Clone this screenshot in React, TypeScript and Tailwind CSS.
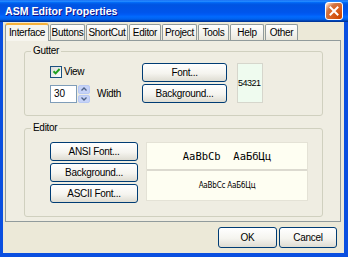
import React from "react";

function XPButton({ children, className }: { children: React.ReactNode; className?: string }) {
  return (
    <div
      className={`flex items-center justify-center rounded-[3px] border border-[#003c74] bg-[linear-gradient(to_bottom,#ffffff,#f5f4ef_55%,#dedcd2)] text-[10px] tracking-[-0.3px] leading-none text-black ${className ?? ""}`}
    >
      {children}
    </div>
  );
}

const tabs: { label: string; w: string; sel?: boolean }[] = [
  { label: "Interface", w: "w-[44px]", sel: true },
  { label: "Buttons", w: "w-[35px]" },
  { label: "ShortCut", w: "w-[42px]" },
  { label: "Editor", w: "w-[32px]" },
  { label: "Project", w: "w-[35px]" },
  { label: "Tools", w: "w-[31px]" },
  { label: "Help", w: "w-[34px]" },
  { label: "Other", w: "w-[33px]" },
];

export default function App() {
  return (
    <div className="w-[348px] h-[257px] flex flex-col bg-[#0a4fe0] font-['Liberation_Sans',Arial,sans-serif] text-black select-none">
      {/* Title bar */}
      <div className="h-[22px] flex items-center justify-between pl-[5px] pr-[5px] bg-[linear-gradient(to_bottom,#0058ee_0%,#3593ff_4%,#288eff_6%,#127dff_8%,#036ffc_10%,#0262ee_14%,#0057e5_20%,#0054e3_24%,#0055eb_56%,#005bf5_66%,#026afe_76%,#0062ef_86%,#0052d6_92%,#0040ab_94%,#003092_100%)]">
        <span className="text-white font-bold text-[10.6px] leading-none [text-shadow:1px_1px_#0f1089]">
          ASM Editor Properties
        </span>
        <div className="w-[18px] h-[18px] rounded-[3px] border border-white bg-[radial-gradient(circle_at_90%_90%,#cc4600_0%,#dc6527_55%,#cd7546_70%,#ffccb2_90%,#fff_100%)] flex items-center justify-center">
          <svg width="10" height="10" viewBox="0 0 10 10">
            <path d="M1.5 1.5 L8.5 8.5 M8.5 1.5 L1.5 8.5" stroke="white" strokeWidth="2" strokeLinecap="square" />
          </svg>
        </div>
      </div>

      {/* Body */}
      <div className="flex-1 flex flex-col bg-[#ece9d8] ml-[3px] mr-[4px] mb-[4px] pl-[2px] pr-[3px] pt-[1px]">
        {/* Tabs */}
        <div className="h-[17px] flex items-end gap-[1px] relative z-10">
          {tabs.map((t) =>
            t.sel ? (
              <div
                key={t.label}
                className={`${t.w} h-[18px] -mb-[1px] flex items-center justify-center text-[10px] tracking-[-0.3px] leading-none border border-b-0 border-[#919b9c] border-t-[2px] border-t-[#f7b23a] rounded-t-[3px] bg-[#f6f5ee]`}
              >
                {t.label}
              </div>
            ) : (
              <div
                key={t.label}
                className={`${t.w} h-[16px] flex items-center justify-center text-[10px] tracking-[-0.3px] leading-none border border-b-0 border-[#919b9c] rounded-t-[2px] bg-[linear-gradient(to_bottom,#ffffff,#f3f2ec_60%,#e9e7dc)]`}
              >
                {t.label}
              </div>
            )
          )}
        </div>

        {/* Tab panel */}
        <div className="h-[182px] border border-[#919b9c] bg-[#efede2] pl-[18px] pr-[17px] pt-[4px] flex flex-col gap-[6px]">
          {/* Gutter */}
          <fieldset className="border border-[#d0d0bf] rounded-[3px] pl-[25px] pr-[4px] pt-[6px] pb-[12px]">
            <legend className="-ml-[19px] px-[2px] text-[10px] tracking-[-0.3px] leading-[12px]">Gutter</legend>
            <div className="flex">
              <div className="w-[92px] flex flex-col">
                <div className="h-[13px] mt-[2px] flex items-center gap-[2px]">
                  <div className="w-[12px] h-[12px] border border-[#1c5180] bg-[linear-gradient(135deg,#dcdcd7,#ffffff)] flex items-center justify-center">
                    <svg width="9" height="9" viewBox="0 0 9 9">
                      <path d="M1.5 4.2 L3.6 6.4 L7.6 2" stroke="#21a121" strokeWidth="2" fill="none" />
                    </svg>
                  </div>
                  <span className="text-[10px] tracking-[-0.3px] leading-none">View</span>
                </div>
                <div className="mt-[7px] h-[18px] flex items-center">
                  <div className="w-[27px] h-[18px] border border-[#7f9db9] bg-white flex items-center pl-[3px] text-[10px] leading-none">
                    30
                  </div>
                  <div className="ml-[1px] w-[12px] h-[18px] flex flex-col gap-[1px]">
                    <div className="flex-1 rounded-[2px] bg-[#c6d3f7] border border-[#b8c9f4] flex items-center justify-center">
                      <svg width="6" height="4" viewBox="0 0 6 4">
                        <path d="M0.5 3.5 L3 1 L5.5 3.5" stroke="#4d6185" strokeWidth="1.3" fill="none" />
                      </svg>
                    </div>
                    <div className="flex-1 rounded-[2px] bg-[#c6d3f7] border border-[#b8c9f4] flex items-center justify-center">
                      <svg width="6" height="4" viewBox="0 0 6 4">
                        <path d="M0.5 0.5 L3 3 L5.5 0.5" stroke="#4d6185" strokeWidth="1.3" fill="none" />
                      </svg>
                    </div>
                  </div>
                  <span className="ml-[7px] text-[10px] tracking-[-0.3px] leading-none">Width</span>
                </div>
              </div>
              <div className="w-[85px] flex flex-col gap-[2px]">
                <XPButton className="h-[19px]">Font...</XPButton>
                <XPButton className="h-[19px]">Background...</XPButton>
              </div>
              <div className="ml-[10px] w-[26px] h-[40px] border border-[#d6d6cc] bg-[#effbef] flex items-center">
                <span className="text-[9px] tracking-[-0.5px] leading-none">54321</span>
              </div>
            </div>
          </fieldset>

          {/* Editor */}
          <fieldset className="border border-[#d0d0bf] rounded-[3px] pl-[25px] pr-[4px] pt-[8px] pb-[13px]">
            <legend className="-ml-[19px] px-[2px] text-[10px] tracking-[-0.3px] leading-[12px]">Editor</legend>
            <div className="flex gap-[8px]">
              <div className="w-[88px] flex flex-col gap-[2px]">
                <XPButton className="h-[19px]">ANSI Font...</XPButton>
                <XPButton className="h-[19px]">Background...</XPButton>
                <XPButton className="h-[19px]">ASCII Font...</XPButton>
              </div>
              <div className="w-[162px] h-[59px] bg-[#fefef2] border border-[#e4e2d6] flex flex-col">
                <div className="h-[28px] flex items-center justify-center border-b-2 border-[#dcdad0] font-['DejaVu_Sans_Mono',monospace] text-[10.5px] leading-none whitespace-pre">
                  AaBbCb  АаБбЦц
                </div>
                <div className="flex-1 flex items-center justify-center text-[8px] leading-none font-['DejaVu_Sans_Condensed','Liberation_Sans',sans-serif] tracking-[-0.2px]">
                  AaBbCc АаБбЦц
                </div>
              </div>
            </div>
          </fieldset>
        </div>

        {/* Dialog buttons */}
        <div className="mt-[5px] flex justify-end gap-[2px] pr-[4px]">
          <XPButton className="w-[59px] h-[21px]">OK</XPButton>
          <XPButton className="w-[58px] h-[21px]">Cancel</XPButton>
        </div>
      </div>
    </div>
  );
}
